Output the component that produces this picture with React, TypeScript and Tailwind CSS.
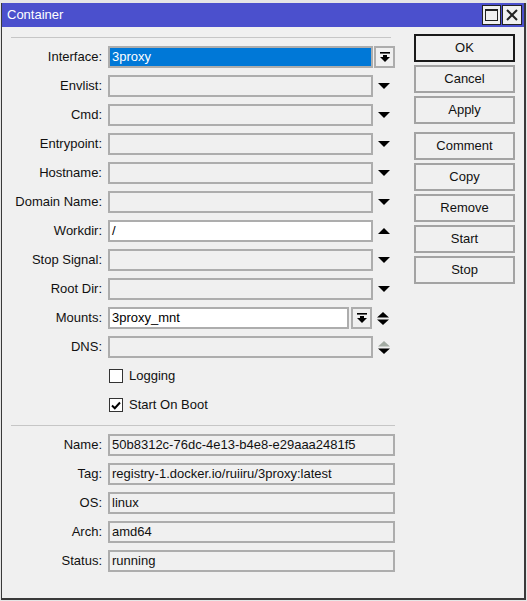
import React from "react";

const font = "font-['Liberation_Sans',Arial,sans-serif]";

function DownArrow() {
  return (
    <svg width="12" height="6" viewBox="0 0 12 6">
      <polygon points="0,0 12,0 6,6" fill="#000" />
    </svg>
  );
}

function UpArrow() {
  return (
    <svg width="12" height="6" viewBox="0 0 12 6">
      <polygon points="0,6 12,6 6,0" fill="#000" />
    </svg>
  );
}

function UpDownArrow({ dimUp = false }: { dimUp?: boolean }) {
  return (
    <svg width="12" height="13" viewBox="0 0 12 13">
      <polygon points="0,5.5 12,5.5 6,0" fill={dimUp ? "#a3aba3" : "#000"} />
      <polygon points="0,7.5 12,7.5 6,13" fill="#000" />
    </svg>
  );
}

function DropButton() {
  return (
    <div className="flex h-[22px] w-[21px] items-center justify-center border-2 border-[#adadad] bg-[#f0f0f0]">
      <svg width="10" height="10" viewBox="0 0 10 10">
        <rect x="0" y="0" width="10" height="1.6" fill="#000" />
        <rect x="3" y="3" width="4" height="2.5" fill="#000" />
        <polygon points="0,5 10,5 5,10" fill="#000" />
      </svg>
    </div>
  );
}

type Trail = "down" | "up" | "updown" | "dnsupdown" | "none";

function Field({
  label,
  value,
  tone = "off",
  trail = "down",
  width = "w-[265px]",
}: {
  label: string;
  value?: string;
  tone?: "off" | "white" | "selected";
  trail?: Trail;
  width?: string;
}) {
  const toneClass =
    tone === "white" ? "bg-white" : tone === "selected" ? "bg-[#0078d7] text-white" : "bg-[#f0f0f0]";
  return (
    <div className="flex h-[22px] items-center">
      <div className="w-[91px] text-right text-[13px] text-[#111]">{label}</div>
      <div className={`ml-[6px] flex h-[22px] items-center border-2 border-[#adadad] pl-[2px] text-[13px] ${width} ${toneClass}`}>
        {value}
      </div>
      {label === "Interface:" ? (
        <div className="ml-[1px]">
          <DropButton />
        </div>
      ) : null}
      {label === "Mounts:" ? (
        <div className="ml-[2px]">
          <DropButton />
        </div>
      ) : null}
      {trail !== "none" ? (
        <div className="flex w-[22px] items-center justify-center">
          {trail === "down" ? <DownArrow /> : null}
          {trail === "up" ? <UpArrow /> : null}
          {trail === "updown" ? <UpDownArrow /> : null}
          {trail === "dnsupdown" ? <UpDownArrow dimUp /> : null}
        </div>
      ) : null}
    </div>
  );
}

function Check({ label, checked }: { label: string; checked?: boolean }) {
  return (
    <div className="flex h-[22px] items-center pl-[98px]">
      <div className="flex h-[14px] w-[14px] items-center justify-center border border-[#333] bg-white">
        {checked ? (
          <svg width="10" height="9" viewBox="0 0 10 9">
            <polyline points="1,4.5 3.8,7.2 9,1.5" fill="none" stroke="#000" strokeWidth="2" />
          </svg>
        ) : null}
      </div>
      <span className="ml-[6px] text-[13px] text-[#111]">{label}</span>
    </div>
  );
}

function Info({ label, value }: { label: string; value: string }) {
  return (
    <div className="flex h-[22px] items-center">
      <div className="w-[91px] text-right text-[13px] text-[#111]">{label}</div>
      <div className="ml-[6px] flex h-[22px] w-[287px] items-center border-2 border-[#adadad] bg-[#f0f0f0] pl-[2px] text-[13px] text-[#111]">
        {value}
      </div>
    </div>
  );
}

function Btn({ label, primary }: { label: string; primary?: boolean }) {
  return (
    <div
      className={`flex h-[28px] w-[101px] items-center justify-center border-2 bg-[#f0f0f0] text-[13px] text-[#111] ${
        primary ? "border-[#1a1a1a]" : "border-[#a3a3a3]"
      }`}
    >
      {label}
    </div>
  );
}

export default function App() {
  return (
    <div className={`h-[601px] w-[527px] overflow-hidden bg-[#e6e6e6] pt-[3px] ${font}`}>
      <div className="ml-[1px] flex h-[597px] w-[525px] flex-col border-b-2 border-l border-r-2 border-[#3a3a3a]">
        <div className="flex h-[24px] items-center bg-[#4b50cd] pl-[5px] pr-[2px]">
          <span className="text-[13px] text-white">Container</span>
          <div className="ml-auto flex gap-[1px]">
            <div className="flex h-[20px] w-[19px] items-center justify-center border border-[#222] bg-[#f0f0f0]">
              <div className="h-[12px] w-[13px] border border-t-2 border-[#222]" />
            </div>
            <div className="flex h-[20px] w-[20px] items-center justify-center border border-[#222] bg-[#f0f0f0]">
              <svg width="12" height="12" viewBox="0 0 12 12">
                <path d="M1 1 L11 11 M11 1 L1 11" stroke="#222" strokeWidth="2" />
              </svg>
            </div>
          </div>
        </div>

        <div className="flex flex-1 bg-[#f0f0f0]">
          <div className="ml-[9px] w-[384px] pt-[10px]">
            <div className="h-px w-[380px] bg-[#c6c6c6]" />
            <div className="mt-[8px] flex flex-col gap-[7px]">
              <Field label="Interface:" value="3proxy" tone="selected" trail="none" />
              <Field label="Envlist:" />
              <Field label="Cmd:" />
              <Field label="Entrypoint:" />
              <Field label="Hostname:" />
              <Field label="Domain Name:" />
              <Field label="Workdir:" value="/" tone="white" trail="up" />
              <Field label="Stop Signal:" />
              <Field label="Root Dir:" />
              <Field label="Mounts:" value="3proxy_mnt" tone="white" trail="updown" width="w-[241px]" />
              <Field label="DNS:" trail="dnsupdown" />
              <Check label="Logging" />
              <Check label="Start On Boot" checked />
            </div>
            <div className="mt-[9px] h-px w-[384px] bg-[#c6c6c6]" />
            <div className="mt-[8px] flex flex-col gap-[7px]">
              <Info label="Name:" value="50b8312c-76dc-4e13-b4e8-e29aaa2481f5" />
              <Info label="Tag:" value="registry-1.docker.io/ruiiru/3proxy:latest" />
              <Info label="OS:" value="linux" />
              <Info label="Arch:" value="amd64" />
              <Info label="Status:" value="running" />
            </div>
          </div>

          <div className="ml-[19px] flex w-[101px] flex-col gap-[3px] pt-[7px]">
            <Btn label="OK" primary />
            <Btn label="Cancel" />
            <Btn label="Apply" />
            <div className="mt-[5px]">
              <Btn label="Comment" />
            </div>
            <Btn label="Copy" />
            <Btn label="Remove" />
            <Btn label="Start" />
            <Btn label="Stop" />
          </div>
        </div>
      </div>
    </div>
  );
}
